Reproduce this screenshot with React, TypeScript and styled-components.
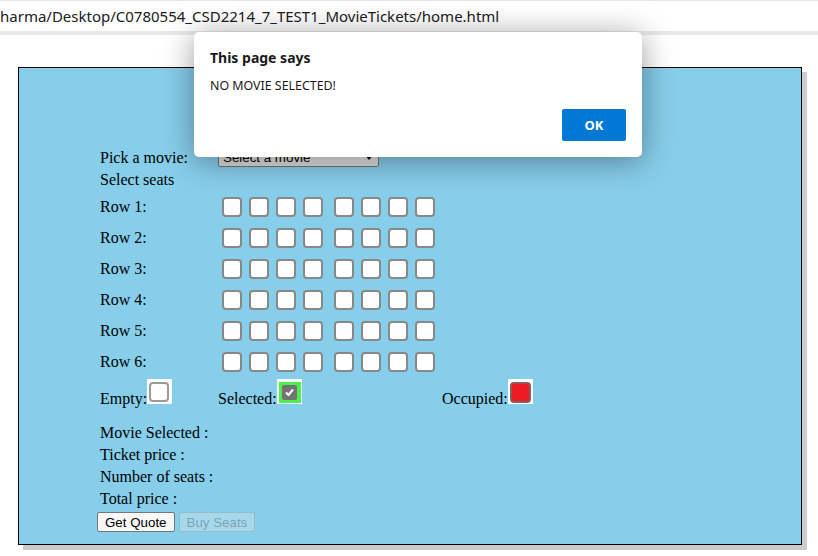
import React from 'react';
import styled, { createGlobalStyle } from 'styled-components';

const GlobalStyle = createGlobalStyle`
  html, body {
    margin: 0;
    padding: 0;
    background: #ffffff;
  }
`;

const Screen = styled.div`
  position: relative;
  width: 818px;
  height: 556px;
  overflow: hidden;
  background: #ffffff;
`;

const AddressBar = styled.div`
  height: 35px;
  box-sizing: border-box;
  border-top: 1px solid #e6e6e6;
  border-bottom: 4px solid #e9e9e9;
  display: flex;
  align-items: center;
  padding-bottom: 1px;
  font-family: 'Noto Sans', 'Open Sans', sans-serif;
  font-size: 15px;
  color: #202020;
  white-space: nowrap;
`;

const Page = styled.div`
  padding: 32px 0 0 18px;
`;

const Panel = styled.div`
  width: 784px;
  height: 478px;
  box-sizing: border-box;
  background: #87ceeb;
  border: 1px solid #000000;
  box-shadow: 5px 5px 0 #cccccc;
  padding: 79px 0 0 78px;
  font-family: 'Liberation Serif', 'Times New Roman', serif;
  font-size: 16px;
  color: #000000;
`;

const FormTable = styled.div`
  margin-left: 3px;
  display: grid;
  grid-template-columns: 118px auto;
`;

const Label = styled.div<{ $h: number }>`
  height: ${p => p.$h}px;
  line-height: ${p => p.$h}px;
`;

const Field = styled.div<{ $h: number }>`
  height: ${p => p.$h}px;
  display: flex;
  align-items: center;
`;

const FakeSelect = styled.div`
  align-self: flex-start;
  width: 161px;
  height: 20px;
  box-sizing: border-box;
  border: 1px solid #767676;
  border-radius: 2px;
  background: linear-gradient(#f2f2f2, #dcdcdc);
  display: flex;
  align-items: center;
  justify-content: space-between;
  padding: 0 5px 0 4px;
  font-family: 'Liberation Sans', Arial, sans-serif;
  font-size: 13.33px;
  color: #000;
`;

const Seat = styled.span<{ $gapBefore?: boolean }>`
  display: inline-block;
  width: 20px;
  height: 20px;
  box-sizing: border-box;
  margin: 0 3px 0 ${p => (p.$gapBefore ? 8 : 4)}px;
  border: 2px solid #888888;
  border-radius: 4px;
  background: #ffffff;
`;

const Legend = styled.div`
  margin-left: 3px;
  display: grid;
  grid-template-columns: 118px 224px auto;
  height: 45px;
  padding-top: 2px;
  box-sizing: border-box;
  line-height: 18px;
`;

const LegendCell = styled.div`
  white-space: nowrap;
`;

const Swatch = styled.span`
  display: inline-block;
  overflow: hidden;
  vertical-align: baseline;
  width: 25px;
  height: 25px;
  box-sizing: border-box;
  background: #ffffff;
`;

const EmptyBox = styled.span`
  display: block;
  width: 20px;
  height: 20px;
  margin: 3px 0 0 2px;
  box-sizing: border-box;
  border: 2px solid #9a9a9a;
  border-radius: 4px;
  background: #ffffff;
`;

const GreenFrame = styled.span`
  display: block;
  width: 22px;
  height: 21px;
  margin: 3px 0 0 2px;
  background: #4cf24c;
  padding: 3px 0 0 3px;
  box-sizing: border-box;
`;

const CheckedBox = styled.span`
  width: 15px;
  height: 15px;
  border-radius: 2px;
  background: #737373;
  display: flex;
  align-items: center;
  justify-content: center;
  svg {
    display: block;
  }
`;

const RedBox = styled.span`
  display: block;
  width: 21px;
  height: 21px;
  margin: 3px 0 0 2px;
  box-sizing: border-box;
  border: 2px solid #8c5a5a;
  border-radius: 4px;
  background: #ed1c24;
`;

const InfoLine = styled.div`
  margin-left: 3px;
  height: 22px;
  line-height: 22px;
`;

const Buttons = styled.div`
  display: flex;
  gap: 4px;
  margin-top: 2px;
`;

const Button = styled.button`
  font-family: 'Liberation Sans', Arial, sans-serif;
  font-size: 13.33px;
  height: 20px;
  padding: 0 7px;
  border: 1px solid #767676;
  border-radius: 2px;
  background: #f7f7f7;
  color: #000;
  &:disabled {
    background: rgba(239, 239, 239, 0.3);
    border-color: rgba(118, 118, 118, 0.3);
    color: rgba(16, 16, 16, 0.3);
  }
`;

const Dialog = styled.div`
  position: absolute;
  left: 194px;
  top: 32px;
  width: 448px;
  height: 125px;
  box-sizing: border-box;
  background: #ffffff;
  border-radius: 5px;
  box-shadow: 0 4px 32px rgba(0, 0, 0, 0.4);
  padding: 16px 16px 16px 16px;
  font-family: 'Noto Sans', 'Open Sans', sans-serif;
  color: #1a1a1a;
  display: flex;
  flex-direction: column;
`;

const DialogTitle = styled.div`
  font-size: 14px;
  font-weight: 700;
  line-height: 20px;
`;

const DialogMessage = styled.div`
  margin-top: 10px;
  font-size: 12.4px;
  line-height: 16px;
`;

const DialogActions = styled.div`
  margin-top: auto;
  display: flex;
  justify-content: flex-end;
`;

const OkButton = styled.button`
  width: 64px;
  height: 32px;
  border: none;
  border-radius: 2px;
  background: #0078d4;
  color: #ffffff;
  font-family: 'Noto Sans', 'Open Sans', sans-serif;
  font-size: 13px;
  font-weight: 700;
`;

const rows = [1, 2, 3, 4, 5, 6];
const seats = [0, 1, 2, 3, 4, 5, 6, 7];

export default function App() {
  return (
    <Screen>
      <GlobalStyle />
      <AddressBar>harma/Desktop/C0780554_CSD2214_7_TEST1_MovieTickets/home.html</AddressBar>
      <Page>
        <Panel>
          <FormTable>
            <Label $h={22}>Pick a movie:</Label>
            <Field $h={22}>
              <FakeSelect>
                <span>Select a movie</span>
                <svg width="8" height="5" viewBox="0 0 8 5">
                  <path d="M0 0 L8 0 L4 5 Z" fill="#000" />
                </svg>
              </FakeSelect>
            </Field>
            <Label $h={22}>Select seats</Label>
            <Field $h={22} />
            {rows.map(r => (
              <React.Fragment key={r}>
                <Label $h={31}>Row {r}:</Label>
                <Field $h={31}>
                  {seats.map(s => (
                    <Seat key={s} $gapBefore={s === 4} />
                  ))}
                </Field>
              </React.Fragment>
            ))}
          </FormTable>
          <Legend>
            <LegendCell>
              Empty:<Swatch><EmptyBox /></Swatch>
            </LegendCell>
            <LegendCell>
              Selected:<Swatch>
                <GreenFrame>
                  <CheckedBox>
                    <svg width="11" height="11" viewBox="0 0 11 11">
                      <path d="M2 5.5 L4.5 8 L9 2.5" fill="none" stroke="#fff" strokeWidth="2" />
                    </svg>
                  </CheckedBox>
                </GreenFrame>
              </Swatch>
            </LegendCell>
            <LegendCell>
              Occupied:<Swatch><RedBox /></Swatch>
            </LegendCell>
          </Legend>
          <InfoLine>Movie Selected :</InfoLine>
          <InfoLine>Ticket price :</InfoLine>
          <InfoLine>Number of seats :</InfoLine>
          <InfoLine>Total price :</InfoLine>
          <Buttons>
            <Button>Get Quote</Button>
            <Button disabled>Buy Seats</Button>
          </Buttons>
        </Panel>
      </Page>
      <Dialog>
        <DialogTitle>This page says</DialogTitle>
        <DialogMessage>NO MOVIE SELECTED!</DialogMessage>
        <DialogActions>
          <OkButton>OK</OkButton>
        </DialogActions>
      </Dialog>
    </Screen>
  );
}
